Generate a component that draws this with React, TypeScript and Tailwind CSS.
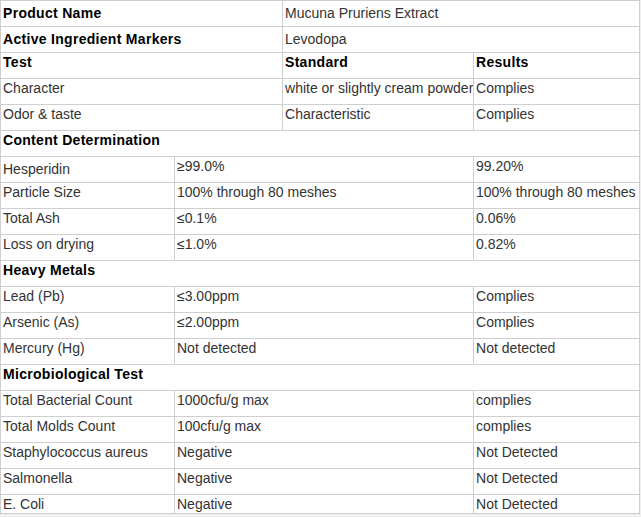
type Cell = { text: string; span?: number; bold?: boolean; drop?: boolean };

// each row is a list of cells across 4 grid columns
const rows: Cell[][] = [
  [{ text: "Product Name", span: 2, bold: true, drop: true }, { text: "Mucuna Pruriens Extract", span: 2, drop: true }],
  [{ text: "Active Ingredient Markers", span: 2, bold: true, drop: true }, { text: "Levodopa", span: 2, drop: true }],
  [{ text: "Test", span: 2, bold: true }, { text: "Standard", bold: true }, { text: "Results", bold: true }],
  [{ text: "Character", span: 2 }, { text: "white or slightly cream powder" }, { text: "Complies" }],
  [{ text: "Odor & taste", span: 2 }, { text: "Characteristic" }, { text: "Complies" }],
  [{ text: "Content Determination", span: 4, bold: true }],
  [{ text: "Hesperidin", drop: true }, { text: "≥99.0%", span: 2 }, { text: "99.20%" }],
  [{ text: "Particle Size" }, { text: "100% through 80 meshes", span: 2 }, { text: "100% through 80 meshes" }],
  [{ text: "Total Ash" }, { text: "≤0.1%", span: 2 }, { text: "0.06%" }],
  [{ text: "Loss on drying" }, { text: "≤1.0%", span: 2 }, { text: "0.82%" }],
  [{ text: "Heavy Metals", span: 4, bold: true }],
  [{ text: "Lead (Pb)" }, { text: "≤3.00ppm", span: 2 }, { text: "Complies" }],
  [{ text: "Arsenic (As)" }, { text: "≤2.00ppm", span: 2 }, { text: "Complies" }],
  [{ text: "Mercury (Hg)" }, { text: "Not detected", span: 2 }, { text: "Not detected" }],
  [{ text: "Microbiological Test", span: 4, bold: true }],
  [{ text: "Total Bacterial Count" }, { text: "1000cfu/g max", span: 2 }, { text: "complies" }],
  [{ text: "Total Molds Count" }, { text: "100cfu/g max", span: 2 }, { text: "complies" }],
  [{ text: "Staphylococcus aureus" }, { text: "Negative", span: 2 }, { text: "Not Detected" }],
  [{ text: "Salmonella" }, { text: "Negative", span: 2 }, { text: "Not Detected" }],
  [{ text: "E. Coli" }, { text: "Negative", span: 2 }, { text: "Not Detected" }],
];

export default function App() {
  return (
    <div className="h-[517px] w-[641px] overflow-hidden bg-[#f0f0f0] font-['Liberation_Sans',Arial,sans-serif] text-[14px]">
      <table className="w-[639px] table-fixed border-collapse bg-white">
        <colgroup>
          <col className="w-[174px]" />
          <col className="w-[108px]" />
          <col className="w-[191px]" />
          <col className="w-[166px]" />
        </colgroup>
        <tbody>
          {rows.map((row, i) => {
            const last = i === rows.length - 1;
            return (
              <tr key={i}>
                {row.map((c, j) => (
                  <td
                    key={j}
                    colSpan={c.span ?? 1}
                    className="border border-[#cfcfcf] p-0 align-top"
                  >
                    <div
                      className={
                        (last ? "h-[18px] " : "h-[25px] ") +
                        "overflow-hidden whitespace-nowrap pl-[2px] leading-[16px] " +
                        (c.drop ? "pt-[4px] " : "pt-[1px] ") +
                        (c.bold
                          ? "font-bold tracking-[0.3px] text-black"
                          : "text-[#333]")
                      }
                    >
                      {c.text}
                    </div>
                  </td>
                ))}
              </tr>
            );
          })}
        </tbody>
      </table>
    </div>
  );
}
